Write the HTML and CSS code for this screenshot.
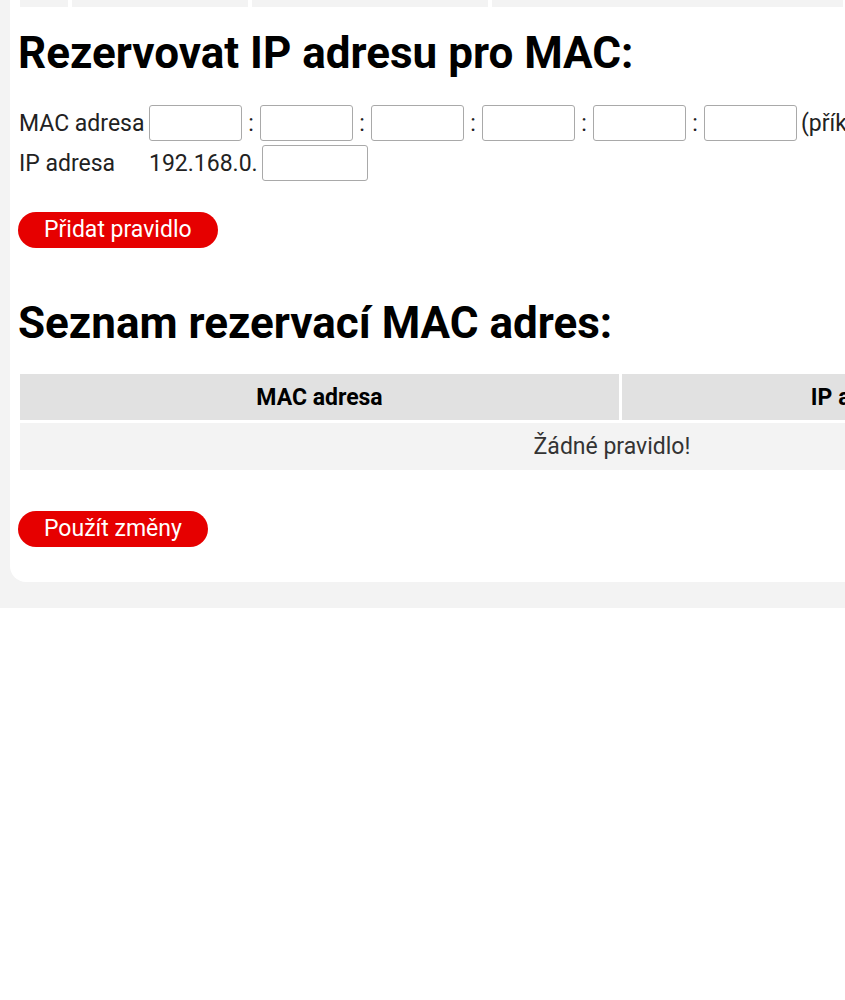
FILE: index.html
```html
<!DOCTYPE html>
<html lang="cs">
<head>
  <meta charset="UTF-8" />
  <meta name="viewport" content="width=device-width, initial-scale=1.0" />
  <title>Rezervace adres</title>
  <link rel="stylesheet" href="styles.css">
</head>
<body>
  <div class="page">
    <div class="card">
      <div class="prev-table">
        <div class="cell" style="width:48px"></div>
        <div class="cell" style="width:176px"></div>
        <div class="cell" style="width:236px"></div>
        <div class="cell" style="width:351px"></div>
      </div>

      <h1>Rezervovat IP adresu pro MAC:</h1>

      <div class="form">
        <div class="label">MAC adresa</div>
        <div class="field">
          <input type="text" class="mac">
          <span class="sep">:</span>
          <input type="text" class="mac">
          <span class="sep">:</span>
          <input type="text" class="mac">
          <span class="sep">:</span>
          <input type="text" class="mac">
          <span class="sep">:</span>
          <input type="text" class="mac">
          <span class="sep">:</span>
          <input type="text" class="mac">
          <span class="hint">(příklad: 00:1A:2B:3C:4D:5E)</span>
        </div>

        <div class="label">IP adresa</div>
        <div class="field">
          <span class="prefix">192.168.0.</span>
          <input type="text" class="ip">
        </div>
      </div>

      <button class="btn">Přidat pravidlo</button>

      <h1 class="list-title">Seznam rezervací MAC adres:</h1>

      <table class="rules">
        <tr>
          <th class="col-mac">MAC adresa</th>
          <th class="col-ip">IP adresa</th>
          <th class="col-del">Smazat</th>
        </tr>
        <tr>
          <td colspan="3">Žádné pravidlo!</td>
        </tr>
      </table>

      <button class="btn apply">Použít změny</button>
    </div>
  </div>
</body>
</html>
```

FILE: styles.css
```css
html, body {
  overflow: hidden;
}
body {
  font-family: Roboto, 'Noto Sans', sans-serif;
  font-size: 23px;
  color: #222;
  background: #fff;
  margin: 0;
  padding: 0;
}
.page {
  width: 1260px;
  background: #f3f3f3;
  padding: 0 0 26px 10px;
  box-shadow: 0 3px 6px rgba(0, 0, 0, 0.14);
}
.card {
  background: #fff;
  padding: 0 8px 35px 8px;
  border-radius: 0 0 16px 16px;
}
.prev-table {
  display: flex;
  gap: 4px;
  padding-left: 2px;
}
.prev-table .cell {
  height: 7px;
  background: #f3f3f3;
}
h1 {
  font-size: 44px;
  font-weight: bold;
  line-height: 52px;
  color: #000;
  margin: 20px 0 0 0;
}
.form {
  display: grid;
  grid-template-columns: 130px auto;
  row-gap: 4px;
  align-items: center;
  margin-top: 26px;
  padding-left: 1px;
}
.field {
  display: flex;
  align-items: center;
}
input {
  height: 36px;
  box-sizing: border-box;
  border: 1px solid #a9a9a9;
  border-radius: 3px;
  margin: 0;
  padding: 0 4px;
  font: inherit;
}
.mac {
  width: 93px;
}
.ip {
  width: 106px;
  margin-left: 4px;
}
.sep {
  width: 18px;
  text-align: center;
}
.hint {
  padding-left: 4px;
  white-space: nowrap;
}
.btn {
  display: block;
  height: 36px;
  padding: 0 26px;
  border: none;
  border-radius: 18px;
  background: #e60000;
  color: #fff;
  font-family: inherit;
  font-size: 23px;
  line-height: 36px;
  margin-top: 31px;
  cursor: pointer;
}
.list-title {
  margin-top: 49px;
}
.rules {
  border-spacing: 3px;
  margin: 22px 0 0 -1px;
  width: 1190px;
}
.rules th {
  background: #e1e1e1;
  color: #000;
  font-weight: bold;
  height: 46px;
  padding: 0;
}
.rules .col-mac {
  width: 599px;
}
.rules .col-ip {
  width: 475px;
}
.rules td {
  background: #f3f3f3;
  text-align: center;
  height: 47px;
  padding: 0;
  color: #333;
}
.apply {
  margin-top: 38px;
}
```
